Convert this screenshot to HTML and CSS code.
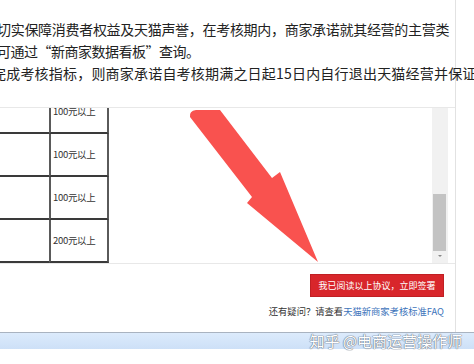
FILE: index.html
```html
<!DOCTYPE html>
<html lang="zh-CN">
<head>
    <meta charset="UTF-8">
    <meta name="viewport" content="width=device-width, initial-scale=1.0">
    <title>新商家考核协议</title>
    <link rel="stylesheet" href="styles.css">
</head>
<body>
    <div class="panel">
        <div class="intro">
            <p class="line l1">切实保障消费者权益及天猫声誉，在考核期内，商家承诺就其经营的主营类</p>
            <p class="line l2">可通过“新商家数据看板”查询。</p>
            <p class="line l3">完成考核指标，则商家承诺自考核期满之日起15日内自行退出天猫经营并保证</p>
        </div>

        <div class="scrollbox">
            <div class="content">
                <div class="table">
                    <div class="row"><div class="cell"></div><div class="cell amount">100元以上</div></div>
                    <div class="row"><div class="cell"></div><div class="cell amount">100元以上</div></div>
                    <div class="row"><div class="cell"></div><div class="cell amount">100元以上</div></div>
                    <div class="row"><div class="cell"></div><div class="cell amount">200元以上</div></div>
                </div>
            </div>
            <div class="scrollbar">
                <div class="thumb"></div>
                <div class="arrow-down"></div>
            </div>
        </div>

        <div class="actions">
            <button class="sign-btn">我已阅读以上协议，立即签署</button>
            <div class="faq">还有疑问？请查看<a href="#">天猫新商家考核标准FAQ</a></div>
        </div>
    </div>

    <div class="taskbar"></div>
    <div class="watermark">知乎 @电商运营操作师</div>

    <!-- 标注箭头 -->
    <svg class="pointer" width="474" height="364" viewBox="0 0 474 364">
        <path d="M190 117 Q189 111 196 110 L220 110 L272 178 L280 172 L318 262 L247 203 L252 197 Z" fill="#f9524f"/>
    </svg>
</body>
</html>
```

FILE: styles.css
```css
body {
    margin: 0;
    background: #fff;
    font-family: "Noto Sans CJK SC", "Liberation Sans", sans-serif;
    color: #222;
    width: 474px;
    height: 364px;
    overflow: hidden;
    position: relative;
}
.panel {
    width: 456px;
    height: 332px;
    border-right: 1px solid #e2e2e2;
    box-sizing: border-box;
}
.intro {
    padding-top: 18px;
    white-space: nowrap;
}
.line {
    margin: 0;
    font-size: 14px;
    line-height: 22px;
}
.l1 {
    margin-left: -3px;
    letter-spacing: -0.3px;
}
.l2 {
    margin-left: -3px;
    letter-spacing: -0.5px;
}
.l3 {
    margin-left: -8px;
    letter-spacing: 0.2px;
}
.scrollbox {
    display: flex;
    margin-top: 23px;
    height: 157px;
    border-top: 1px solid #e8e8e8;
    border-bottom: 1px solid #e8e8e8;
    box-sizing: border-box;
}
.content {
    flex: 1;
    overflow: hidden;
}
.table {
    margin-top: -17px;
    width: 109px;
}
.row {
    display: grid;
    grid-template-columns: 49px 60px;
    height: 43px;
}
.cell {
    border-bottom: 2px solid #3a3a3a;
}
.amount {
    border-left: 2px solid #5a5a5a;
    border-right: 2px solid #5a5a5a;
    font-size: 9.5px;
    line-height: 41px;
    padding-left: 2px;
    color: #333;
    letter-spacing: -0.3px;
}
.scrollbar {
    width: 16px;
    margin-right: 7px;
    background: #f1f1f1;
    position: relative;
}
.thumb {
    position: absolute;
    left: 1px;
    right: 2px;
    top: 86px;
    height: 57px;
    background: #c3c3c3;
}
.arrow-down {
    position: absolute;
    left: 6px;
    top: 147px;
    width: 0;
    height: 0;
    border-left: 2px solid transparent;
    border-right: 2px solid transparent;
    border-top: 2px solid #888;
}
.actions {
    display: flex;
    flex-direction: column;
    align-items: flex-end;
    padding-right: 11px;
    padding-top: 10px;
}
.sign-btn {
    width: 134px;
    height: 23px;
    background: #d8262b;
    color: #fff;
    border: 1px solid #c01f23;
    font-family: inherit;
    font-size: 9px;
    padding: 0;
    cursor: pointer;
}
.faq {
    margin-top: 7px;
    font-size: 9.3px;
    line-height: 14px;
    color: #333;
}
.faq a {
    color: #3d74bb;
    text-decoration: none;
}
.taskbar {
    height: 16px;
    border-top: 1px solid #a9b3c0;
    background: linear-gradient(#dcebfc, #cde0f7);
}
.watermark {
    position: absolute;
    right: 12px;
    top: 332px;
    font-size: 15px;
    line-height: 18px;
    color: #fff;
    text-shadow: 0 0 1px #6b7685, 0 0 1px #6b7685, 0 0 1px #6b7685;
}
.pointer {
    position: absolute;
    left: 0;
    top: 0;
    pointer-events: none;
}
```
